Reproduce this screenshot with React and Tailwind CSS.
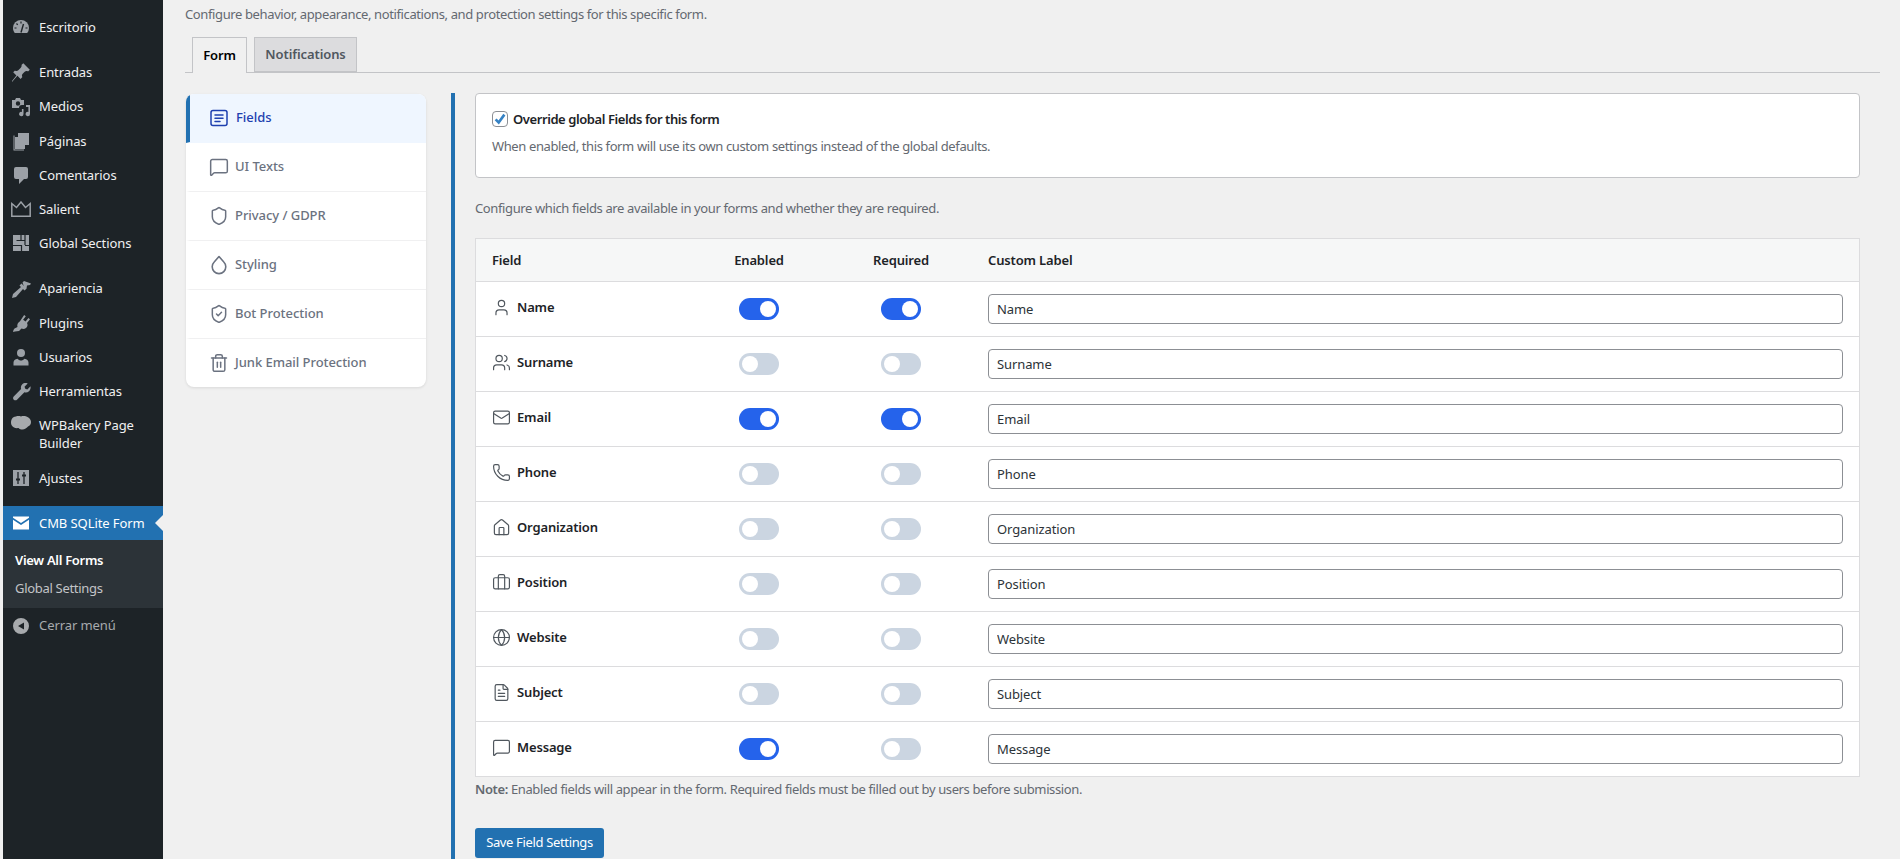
import React from 'react';
import { User, Users, Mail, Phone, Home, Briefcase, Globe, FileText, MessageSquare, Shield, ShieldCheck, Trash2 } from 'lucide-react';

const Gauge = () => (
  <svg viewBox="0 0 20 20" className="w-5 h-5 fill-current">
    <path d="M3.8 16h12.4A8 8 0 0 0 18 11a8 8 0 1 0-16 0c0 1.9.7 3.6 1.8 5z" />
    <path d="M10 15.500 12.500 7" stroke="#1d2327" strokeWidth="1.400" />
    <path d="M10 4.500v2M5.500 6.500l1.200 1.400M3.500 11h2M16.500 11h-2" stroke="#1d2327" strokeWidth="1.200" />
  </svg>
);
const Pin = () => (
  <svg viewBox="0 0 20 20" className="w-5 h-5 fill-current">
    <path d="M10.400 3l1.900-1.800 6.500 6.500-1.800 1.900c-1-.8-2.400-.6-3.300.2l-2 2c-.9.900-1 2.300-.3 3.300l-1.800 1.800-3.200-3.200L1 19.900v-1l4.400-5.400-3.200-3.200L4 8.400c1 .8 2.400.6 3.300-.2l2-2c.9-.9 1.900-2.300 1.100-3.200z" />
  </svg>
);
const Media = () => (
  <svg viewBox="0 0 20 20" className="w-5 h-5 fill-current">
    <path fillRule="evenodd" d="M1 3h3l1-2h4l1 2h3v5h-2a3 3 0 0 0-3 3H1zM7 4.300a2.200 2.200 0 1 0 0 4.400 2.200 2.200 0 0 0 0-4.400z" />
    <path d="M19 8v9a2.200 2.200 0 1 1-1.600-2.100V10H15V8z" />
    <path d="M12.500 12v5a2.200 2.200 0 1 1-1.600-2.100V12z" />
  </svg>
);
const Pages = () => (
  <svg viewBox="0 0 20 20" className="w-5 h-5 fill-current">
    <path d="M7 2h11v12h-4v4H4V6h3z M2.500 4.500V19.500H13V18.500H3.500V4.500z" />
  </svg>
);
const Comment = () => (
  <svg viewBox="0 0 20 20" className="w-5 h-5 fill-current">
    <path d="M5 2h10a2 2 0 0 1 2 2v8a2 2 0 0 1-2 2h-2l-5 5v-5H5a2 2 0 0 1-2-2V4a2 2 0 0 1 2-2z" />
  </svg>
);
const Crown = () => (
  <svg viewBox="0 0 20 16" className="w-5 h-4 fill-none stroke-current" strokeWidth="1.500">
    <path d="M.8 15.200V2.500l4.700 4L10 1l4.500 5.500 4.700-4v12.700z" />
  </svg>
);
const Sections = () => (
  <svg viewBox="0 0 20 20" className="w-5 h-5 fill-current">
    <path d="M2 2h16v16H2z" />
    <path d="M10 2v5M5.500 7.500H14M14 2v10M2 12.500h8.500V18M14 12.500H18" stroke="#1d2327" strokeWidth="1.200" fill="none" />
  </svg>
);
const Brush = () => (
  <svg viewBox="0 0 20 20" className="w-5 h-5 fill-current">
    <path d="M11.500 3.500 13 2l7 2.500-1 1.500-3 .5-.5 3-1.500 1z" />
    <path d="M10.500 4.500l5 5-2 2-1.500-1.500-7 8-4 1 1-4 8-7-1.500-1.500z" />
  </svg>
);
const Plug = () => (
  <svg viewBox="0 0 20 20" className="w-5 h-5 fill-current">
    <path d="M13.100 2l1.700 1.200-2.700 3.500 2.500 1.700 2.800-3.500 1.600 1.300-3 3.700c1 1.700.6 3.800-1 5.100-1.400 1.100-3 1.200-4.500.6L8 18l-4 .5-2 .5.500-2 1-1.500L6.500 14c-.5-1.600-.2-3.200 1-4.500l1.500-1.200z" />
  </svg>
);
const Person = () => (
  <svg viewBox="0 0 20 20" className="w-5 h-5 fill-current">
    <circle cx="10" cy="6" r="4" />
    <path d="M2.500 18.500v-3c0-2 1.500-3.500 4-3.800 1 1.200 2.200 1.800 3.500 1.800s2.500-.6 3.500-1.800c2.500.3 4 1.800 4 3.800v3z" />
  </svg>
);
const Wrench = () => (
  <svg viewBox="0 0 20 20" className="w-5 h-5 fill-current">
    <path d="M16.700 2.500 13.500 5.700l.8 2 2 .8 3.200-3.200c.4 2-.2 3.800-1.500 5-1.300 1.200-3 1.500-4.600 1L6 18.700c-.8.800-2.200.9-3.200.1-1-1-.9-2.400-.1-3.200l7.400-7.500c-.5-1.700-.2-3.400 1-4.700 1.400-1.300 3.600-1.700 5.600-.9z" />
  </svg>
);
const Cloud = () => (
  <svg viewBox="0 0 20 14" className="w-5 h-[14px] fill-[#a7aaad]">
    <path d="M5 .500C6.500-.200 8.500 0 10 .500c2-.800 5-.500 7 .800 2 1.200 3 3 3 4.700 0 2-1 3.500-3 4.500-1 1.500-3.500 3-5.500 3-1.500 0-3-.500-4-1.500-3 .5-6-.5-7-3C-.500 7 0 3 2 1.500c1-.7 2-1 3-1z" />
  </svg>
);
const Sliders = () => (
  <svg viewBox="0 0 20 20" className="w-5 h-5 fill-current">
    <path d="M2 2h16v16H2z" />
    <path d="M7 4v12M13 4v12" stroke="#1d2327" strokeWidth="1.300" />
    <path d="M5 11.500h4M11 7.500h4" stroke="#1d2327" strokeWidth="2" />
  </svg>
);
const Envelope = () => (
  <svg viewBox="0 0 20 20" className="w-5 h-5 fill-current">
    <path d="M2 3.500h16v1.200L10 10 2 4.700z" />
    <path d="M2 6.800l8 5.200 8-5.200v9.700H2z" />
  </svg>
);
const Collapse = () => (
  <svg viewBox="0 0 20 20" className="w-5 h-5 fill-current">
    <path fillRule="evenodd" d="M10 2a8 8 0 1 1 0 16 8 8 0 0 1 0-16zm3 4.500L7 10l6 3.500z" />
  </svg>
);
const FieldsIcon = () => (
  <svg viewBox="0 0 18 18" className="w-[18px] h-[18px] fill-none stroke-current" strokeWidth="1.500" strokeLinecap="round">
    <rect x="1" y="1.500" width="16" height="15" rx="2" />
    <path d="M5 6h8M5 9.200h8M5 12.400h5" />
  </svg>
);
const DropIcon = () => (
  <svg viewBox="0 0 18 20" className="w-[18px] h-5 fill-none stroke-current" strokeWidth="1.600" strokeLinejoin="round">
    <path d="M9 1.500 4.200 7a6.800 6.800 0 1 0 9.600 0z" />
  </svg>
);

const menu = [
  { label: 'Escritorio', icon: Gauge, gap: false },
  { label: 'Entradas', icon: Pin, gap: true },
  { label: 'Medios', icon: Media },
  { label: 'Páginas', icon: Pages },
  { label: 'Comentarios', icon: Comment },
  { label: 'Salient', icon: Crown },
  { label: 'Global Sections', icon: Sections },
  { label: 'Apariencia', icon: Brush, gap: true },
  { label: 'Plugins', icon: Plug },
  { label: 'Usuarios', icon: Person },
  { label: 'Herramientas', icon: Wrench },
  { label: 'WPBakery Page Builder', icon: Cloud, top: true },
  { label: 'Ajustes', icon: Sliders },
];

const sideNav = [
  { label: 'Fields', icon: FieldsIcon, active: true, custom: true },
  { label: 'UI Texts', icon: MessageSquare },
  { label: 'Privacy / GDPR', icon: Shield },
  { label: 'Styling', icon: DropIcon, custom: true },
  { label: 'Bot Protection', icon: ShieldCheck },
  { label: 'Junk Email Protection', icon: Trash2 },
];

const fields = [
  { label: 'Name', icon: User, enabled: true, required: true },
  { label: 'Surname', icon: Users },
  { label: 'Email', icon: Mail, enabled: true, required: true },
  { label: 'Phone', icon: Phone },
  { label: 'Organization', icon: Home },
  { label: 'Position', icon: Briefcase },
  { label: 'Website', icon: Globe },
  { label: 'Subject', icon: FileText },
  { label: 'Message', icon: MessageSquare, enabled: true },
];

function Toggle({ on }) {
  return (
    <span className={`flex items-center w-10 h-[22px] rounded-full px-[3px] ${on ? 'justify-end bg-[#2563eb]' : 'justify-start bg-[#cbd5e1]'}`}>
      <span className="w-4 h-4 rounded-full bg-white" />
    </span>
  );
}

function Sidebar() {
  return (
    <aside className="w-40 shrink-0 bg-[#1d2327] pt-[10px] text-[13px] leading-[18.2px] text-[#f0f0f1] tracking-[-0.08px]">
      {menu.map(m => (
        <div key={m.label} className={`flex py-2 ${m.top ? 'items-start' : 'items-center'} ${m.gap ? 'mt-[11px]' : ''}`}>
          <span className={`w-9 h-[18px] shrink-0 flex justify-center text-[#9ca1a7] ${m.top ? 'items-start' : 'items-center'}`}><m.icon /></span>
          <span className="pr-2">{m.label}</span>
        </div>
      ))}
      <div className="relative flex items-center py-2 mt-[11px] bg-[#2271b1] text-white">
        <span className="w-9 h-[18px] shrink-0 flex items-center justify-center"><Envelope /></span>
        <span className="whitespace-nowrap">CMB SQLite Form</span>
        <span className="absolute right-0 top-1/2 -mt-2 border-8 border-transparent border-r-[#f0f0f0]" />
      </div>
      <div className="bg-[#2c3338] py-[6px] tracking-[-0.3px]">
        <div className="px-3 py-[5px] font-semibold text-white">View All Forms</div>
        <div className="px-3 py-[5px] text-[#c3c4c7]">Global Settings</div>
      </div>
      <div className="flex items-center py-2 text-[#a7aaad]">
        <span className="w-9 h-[18px] shrink-0 flex items-center justify-center"><Collapse /></span>
        <span>Cerrar menú</span>
      </div>
    </aside>
  );
}

export default function App() {
  return (
    <div className="flex h-[859px] overflow-hidden pl-[3px] bg-[#f0f0f0] text-[13px] tracking-[-0.38px] text-[#3c434a] [font-family:'Noto_Sans','Open_Sans',sans-serif]">
      <Sidebar />
      <main className="flex-1 min-w-0 flex flex-col pl-[22px] pr-5">
        <p className="pt-[5px] leading-[18px] text-[#646970]">Configure behavior, appearance, notifications, and protection settings for this specific form.</p>
        <div className="flex gap-[7px] mt-[14px] pl-[7px] border-b border-[#c3c4c7] h-[36px] tracking-[-0.1px]">
          <div className="h-[36px] w-[55px] flex items-center justify-center border border-b-0 border-[#c3c4c7] bg-[#f0f0f0] font-semibold text-black">Form</div>
          <div className="h-[35px] w-[103px] flex items-center justify-center border border-[#c3c4c7] bg-[#dcdcde] font-semibold text-[#50575e]">Notifications</div>
        </div>
        <div className="flex flex-1 min-h-0 mt-5 pl-px pr-5">
          <nav className="w-60 shrink-0 self-start mt-px rounded-lg bg-white overflow-hidden shadow-[0_1px_3px_rgba(0,0,0,0.1)] tracking-[-0.05px]">
            {sideNav.map(n => (
              <div key={n.label} className={`flex items-center h-[49px] pl-5 border-l-4 border-b font-medium last:h-[48px] ${n.active ? 'gap-2 border-l-[#2271b1] border-b-[#eff6ff] bg-[#eff6ff] text-[#1e40af]' : 'gap-[7px] border-l-transparent border-b-[#f0f0f1] last:border-b-0 text-[#6b7280]'}`}>
                <span className="w-[18px] flex justify-center shrink-0">
                  {n.custom ? <n.icon /> : <n.icon size={20} strokeWidth={1.8} className="shrink-0" />}
                </span>
                <span>{n.label}</span>
              </div>
            ))}
          </nav>
          <section className="flex-1 min-w-0 ml-[25px] border-l-4 border-[#2271b1] pl-5">
            <div className="h-[85px] bg-white border border-[#c3c4c7] rounded px-4 pt-4">
              <label className="flex items-center gap-[5px] font-semibold text-[#1d2327] leading-[18px] tracking-[-0.42px]">
                <span className="w-4 h-4 flex items-center justify-center bg-white border border-[#8c8f94] rounded-[4px]">
                  <svg viewBox="0 0 16 16" className="w-4 h-4 fill-none stroke-[#3582c4]" strokeWidth="3"><path d="M3 8.500 6.500 12 13 3" /></svg>
                </span>
                Override global Fields for this form
              </label>
              <p className="mt-[9px] leading-[18px] text-[#646970]">When enabled, this form will use its own custom settings instead of the global defaults.</p>
            </div>
            <p className="mt-[21px] leading-[18px] text-[#646970]">Configure which fields are available in your forms and whether they are required.</p>
            <div className="mt-[21px] bg-white border border-[#dcdcde]">
              <div className="grid grid-cols-[212px_142px_142px_1fr] items-center h-[43px] pt-px bg-[#f6f7f7] border-b border-[#dcdcde] font-semibold text-[#1d2327] tracking-[-0.15px]">
                <span className="pl-4">Field</span>
                <span className="text-center">Enabled</span>
                <span className="text-center">Required</span>
                <span className="pl-4">Custom Label</span>
              </div>
              {fields.map(f => (
                <div key={f.label} className="grid grid-cols-[212px_142px_142px_1fr] items-center h-[55px] border-b border-[#dcdcde] last:border-b-0 last:h-[54px]">
                  <span className="flex items-center pl-4 font-semibold text-[#1d2327] tracking-[-0.15px]">
                    <span className="w-[18px] mr-[7px] flex justify-center -mt-[3px]">
                      <f.icon size={19} strokeWidth={1.5} className="shrink-0 text-[#50575e]" />
                    </span>
                    <span className="-mt-[3px]">{f.label}</span>
                  </span>
                  <span className="flex justify-center"><Toggle on={f.enabled} /></span>
                  <span className="flex justify-center"><Toggle on={f.required} /></span>
                  <span className="px-4">
                    <input defaultValue={f.label} className="w-full h-[30px] px-2 bg-white border border-[#8c8f94] rounded text-[#2c3338] tracking-[-0.1px]" />
                  </span>
                </div>
              ))}
            </div>
            <p className="mt-[3px] leading-[18px] text-[#646970]"><strong className="font-semibold">Note:</strong> Enabled fields will appear in the form. Required fields must be filled out by users before submission.</p>
            <button className="mt-[30px] w-[129px] h-[30px] rounded-[3px] bg-[#2271b1] text-white tracking-[-0.35px]">Save Field Settings</button>
          </section>
        </div>
      </main>
    </div>
  );
}
